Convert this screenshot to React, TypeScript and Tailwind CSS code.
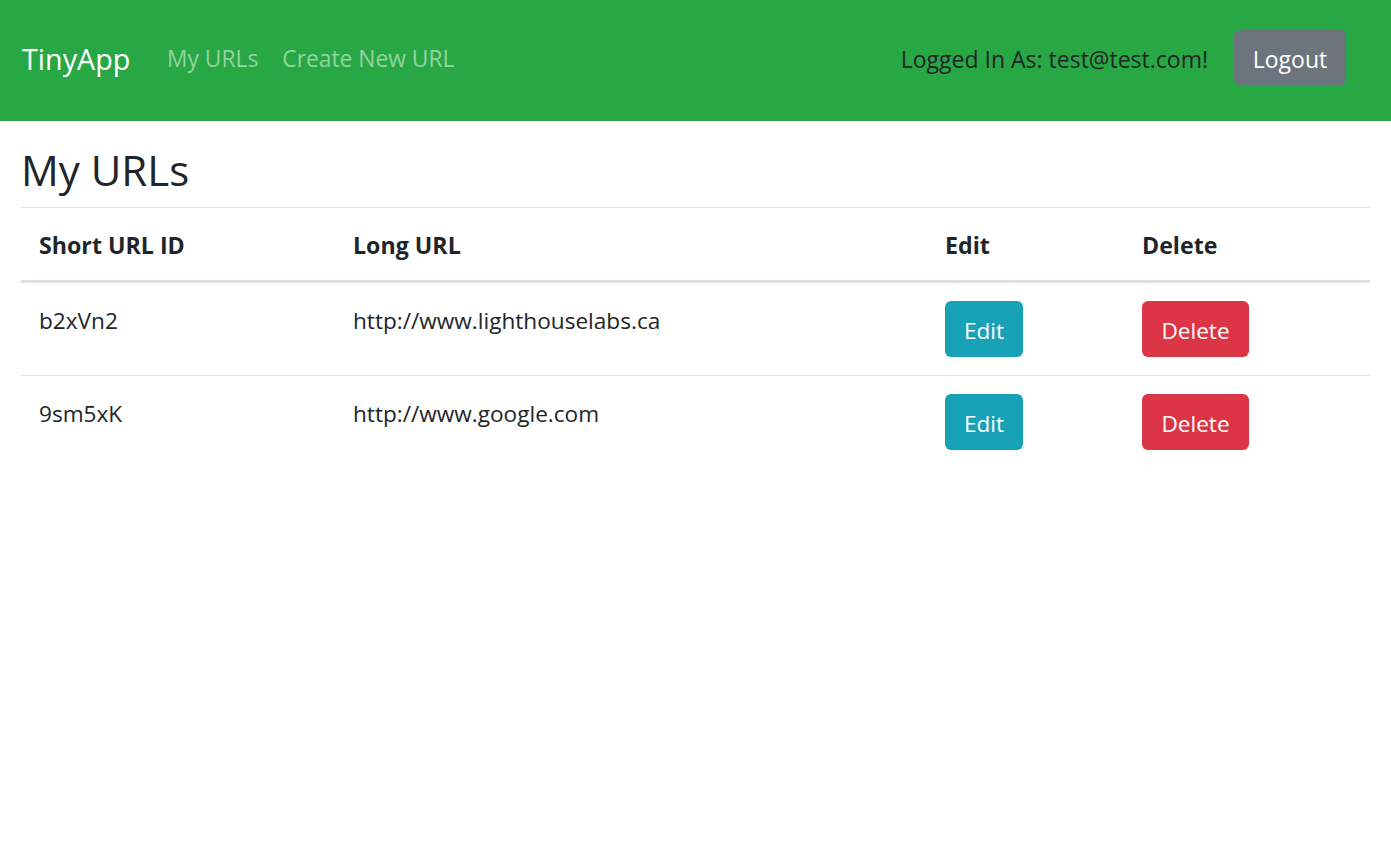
const rows = [
  { id: "b2xVn2", url: "http://www.lighthouselabs.ca" },
  { id: "9sm5xK", url: "http://www.google.com" },
];

const Navbar = () => {
  return (
    <nav className="h-[121px] bg-[#28a745] pl-[22px] pr-[45px] pt-[30px]">
      <div className="flex h-[55px] items-center">
        <a className="w-[145px] pt-[2px] text-[28.7px] leading-[45px] text-white">TinyApp</a>
        <ul className="flex items-center gap-[24px] pt-[3px] text-[22.8px] text-[#93d3a2]">
          <li>My URLs</li>
          <li>Create New URL</li>
        </ul>
        <div className="ml-auto flex items-center">
          <span className="pt-[3px] text-[23px] text-[#212529]">Logged In As: test@test.com!</span>
          <button className="ml-[26px] h-[55px] w-[112px] rounded-[6px] bg-[#6c757d] pt-[3px] text-[23px] text-white">
            Logout
          </button>
        </div>
      </div>
    </nav>
  );
};

const UrlTable = () => {
  return (
    <table className="w-full table-fixed border-collapse text-left text-[22.6px] leading-[36px]">
      <thead>
        <tr className="border-t border-b-[3px] border-t-[#dee2e6] border-b-[#dee2e6]">
          <th className="w-[315px] px-[18px] pt-[19px] pb-[17px] text-[23.2px] font-bold">Short URL ID</th>
          <th className="w-[592px] pl-[17px] pr-[18px] pt-[19px] pb-[17px] text-[23.2px] font-bold">Long URL</th>
          <th className="w-[197px] pl-[17px] pr-[18px] pt-[19px] pb-[17px] text-[23.2px] font-bold">Edit</th>
          <th className="pl-[17px] pr-[18px] pt-[19px] pb-[17px] text-[23.2px] font-bold">Delete</th>
        </tr>
      </thead>
      <tbody>
        {rows.map((row, i) => (
          <tr key={row.id} className={i === 0 ? "border-b border-[#dee2e6]" : ""}>
            <td className="px-[18px] pt-[20px] pb-[16px] align-top">{row.id}</td>
            <td className="pl-[17px] pr-[18px] pt-[20px] pb-[16px] align-top">{row.url}</td>
            <td className="pl-[17px] pr-[18px] py-[18px] align-top">
              <button className="h-[56px] w-[78px] rounded-[6px] bg-[#17a2b8] pt-[3px] text-white">Edit</button>
            </td>
            <td className="pl-[17px] pr-[18px] py-[18px] align-top">
              <button className="h-[56px] w-[107px] rounded-[6px] bg-[#dc3545] pt-[3px] text-white">Delete</button>
            </td>
          </tr>
        ))}
      </tbody>
    </table>
  );
};

export default function App() {
  return (
    <div className="min-h-screen bg-white font-['Open_Sans','Liberation_Sans',sans-serif] text-[#212529]">
      <Navbar />
      <main className="px-[21px] pt-[22px]">
        <h1 className="mb-[10px] text-[42px] leading-[54px] font-normal">My URLs</h1>
        <UrlTable />
      </main>
    </div>
  );
}
